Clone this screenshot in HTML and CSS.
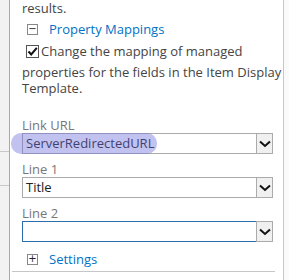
FILE: index.html
```html
<!DOCTYPE html>
<html lang="en">
<head>
    <meta charset="UTF-8">
    <title>Property Mappings</title>
    <link rel="stylesheet" href="styles.css">
</head>
<body>
    <div class="page">
        <!-- 左侧灰色栏 -->
        <div class="gutter">
            <div class="gutter-cell g1"></div>
            <div class="gutter-cell g2"></div>
            <div class="gutter-cell g3"></div>
        </div>

        <div class="panel">
            <div class="text first">results.</div>

            <div class="section-head">
                <span class="box">&minus;</span>
                <span class="section-title">Property Mappings</span>
            </div>

            <div class="check-row">
                <span class="check">
                    <svg width="13" height="13" viewBox="0 0 13 13">
                        <rect x="0.5" y="0.5" width="12" height="12" fill="#fff" stroke="#555"/>
                        <path d="M2.5 6.5 L5.2 9.5 L10.8 2.8" fill="none" stroke="#111" stroke-width="2"/>
                    </svg>
                </span>
                <span class="text">Change the mapping of managed</span>
            </div>
            <div class="text wrap">properties for the fields in the Item Display<br>Template.</div>

            <div class="field f1">
                <div class="label">Link URL</div>
                <div class="select">
                    <span class="value">ServerRedirectedURL</span>
                    <span class="arrow"><svg width="12" height="8" viewBox="0 0 12 8"><path d="M1 1.5 L6 6 L11 1.5" fill="none" stroke="#111" stroke-width="2"/></svg></span>
                </div>
                <div class="marker"></div>
            </div>

            <div class="field">
                <div class="label">Line 1</div>
                <div class="select">
                    <span class="value">Title</span>
                    <span class="arrow"><svg width="12" height="8" viewBox="0 0 12 8"><path d="M1 1.5 L6 6 L11 1.5" fill="none" stroke="#111" stroke-width="2"/></svg></span>
                </div>
            </div>

            <div class="field">
                <div class="label">Line 2</div>
                <div class="select focus">
                    <span class="value"></span>
                    <span class="arrow"><svg width="12" height="8" viewBox="0 0 12 8"><path d="M1 1.5 L6 6 L11 1.5" fill="none" stroke="#111" stroke-width="2"/></svg></span>
                </div>
            </div>

            <div class="section-head settings">
                <span class="box">+</span>
                <span class="section-title">Settings</span>
            </div>

            <div class="rule"></div>
        </div>

        <div class="right-gutter"></div>
    </div>
</body>
</html>
```

FILE: styles.css
```css
/* 全局样式 */
body {
    margin: 0;
    font-family: 'Open Sans', 'Noto Sans', sans-serif;
    font-size: 13px;
    color: #444;
    background: #fff;
}
.page {
    display: flex;
    height: 280px;
    overflow: hidden;
}

/* 左侧栏 */
.gutter {
    flex: 0 0 9px;
    background: #f2f2f2;
    border-right: 1px solid #a8a8a8;
    display: flex;
    flex-direction: column;
}
.gutter-cell {
    border-bottom: 1px solid #c8c8c8;
}
.g1 { height: 151px; }
.g2 { height: 33px; }
.g3 { height: 88px; border-bottom: none; }

.right-gutter {
    flex: 0 0 5px;
    border-left: 1px solid #c8c8c8;
    background: #fafafa;
}

/* 主面板 */
.panel {
    flex: 1;
    min-width: 0;
    padding-left: 12px;
    position: relative;
}
.text {
    line-height: 16px;
}
.first {
    padding-top: 1px;
    line-height: 15px;
}

.section-head {
    display: flex;
    align-items: center;
    height: 18px;
    margin-top: 4px;
    padding-left: 5px;
}
.box {
    width: 9px;
    height: 9px;
    border: 1px solid #888;
    font-size: 10px;
    line-height: 8px;
    text-align: center;
    color: #222;
    font-family: 'DejaVu Sans', sans-serif;
}
.section-title {
    margin-left: 11px;
    color: #0072c6;
}

.check-row {
    display: flex;
    align-items: center;
    margin-top: 4px;
    padding-left: 4px;
    height: 18px;
}
.check {
    display: flex;
    margin-right: 2px;
}
.wrap {
    margin-top: 4px;
    white-space: nowrap;
}

/* 下拉框 */
.field {
    position: relative;
    margin-top: 7px;
}
.f1 {
    margin-top: 21px;
}
.label {
    color: #777;
    line-height: 16px;
}
.select {
    display: flex;
    width: 249px;
    height: 19px;
    border: 1px solid #ababab;
    background: #fff;
}
.select.focus {
    border-color: #2a6ead;
}
.value {
    flex: 1;
    padding-left: 3px;
    line-height: 19px;
    color: #222;
}
.arrow {
    width: 15px;
    margin: -1px -1px -1px 0;
    border: 1px solid #ababab;
    background: #f0f0f0;
    display: flex;
    align-items: center;
    justify-content: center;
}

/* 荧光笔标记 */
.marker {
    position: absolute;
    left: -11px;
    top: 16px;
    width: 146px;
    height: 21px;
    border-radius: 10px;
    background: rgba(110, 110, 220, 0.42);
}

.settings {
    margin-top: 8px;
}
.rule {
    margin-top: 3px;
    margin-left: -10px;
    width: 263px;
    border-top: 1px solid #c6c6c6;
}
```
